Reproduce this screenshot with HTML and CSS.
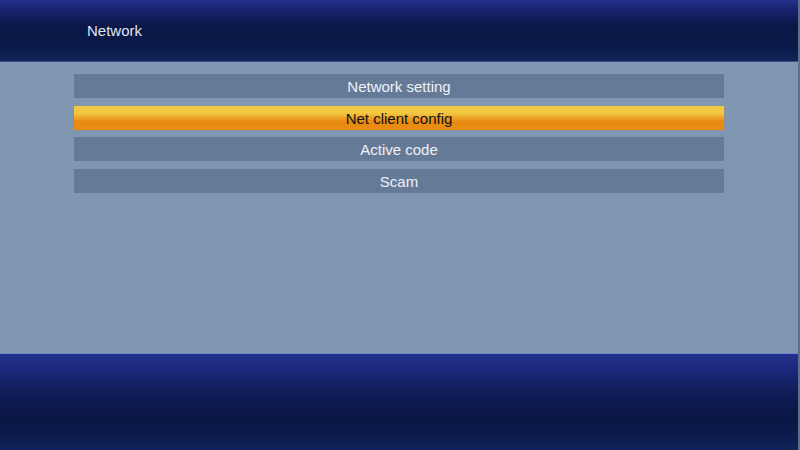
FILE: index.html
```html
<!DOCTYPE html>
<html>
<head>
<meta charset="utf-8">
<link rel="stylesheet" href="styles.css">
</head>
<body>
<div class="screen">
  <header class="top">
    <span class="title">Network</span>
  </header>
  <main class="content">
    <ul class="menu">
      <li class="item">Network setting</li>
      <li class="item active">Net client config</li>
      <li class="item">Active code</li>
      <li class="item">Scam</li>
    </ul>
  </main>
  <footer class="bottom"></footer>
</div>
</body>
</html>
```
FILE: styles.css
```css
* { box-sizing: border-box; }
html, body { margin: 0; padding: 0; }
body {
  width: 800px;
  height: 450px;
  overflow: hidden;
  font-family: "Liberation Sans", Arial, sans-serif;
  background: #8196b0;
}
.screen {
  width: 800px;
  height: 450px;
  display: flex;
  flex-direction: column;
  border-right: 2px solid #5d6f8c;
}
.top {
  height: 62px;
  flex: none;
  display: flex;
  align-items: center;
  padding-left: 87px;
  padding-bottom: 1px;
  background: linear-gradient(to bottom, #22328c 0%, #15226a 18%, #0a1746 45%, #0a1a48 75%, #0f2558 100%);
  border-bottom: 1px solid #3d4f86;
}
.title {
  color: #dfe4ee;
  font-size: 15px;
}
.content {
  flex: 1;
  background: #8196b0;
  padding: 12px 74px 0 74px;
}
.menu {
  list-style: none;
  margin: 0;
  padding: 0;
  display: flex;
  flex-direction: column;
  gap: 7.5px;
}
.item {
  height: 24px;
  display: flex;
  align-items: center;
  justify-content: center;
  background: #657a97;
  color: #eef1f6;
  font-size: 15px;
  padding-top: 1px;
}
.item.active {
  background: linear-gradient(to bottom, #efc94a 0%, #f2c841 30%, #eea22a 50%, #e88a12 65%, #e88c14 100%);
  color: #111;
  box-shadow: 0 0 1px #b88a2a;
}
.bottom {
  height: 97px;
  flex: none;
  border-top: 1px solid #6e86cc;
  background: linear-gradient(to bottom, #22318c 0%, #1c2a7e 15%, #0f1c56 40%, #0a1644 65%, #0b1c4c 85%, #0f2558 100%);
}
```
